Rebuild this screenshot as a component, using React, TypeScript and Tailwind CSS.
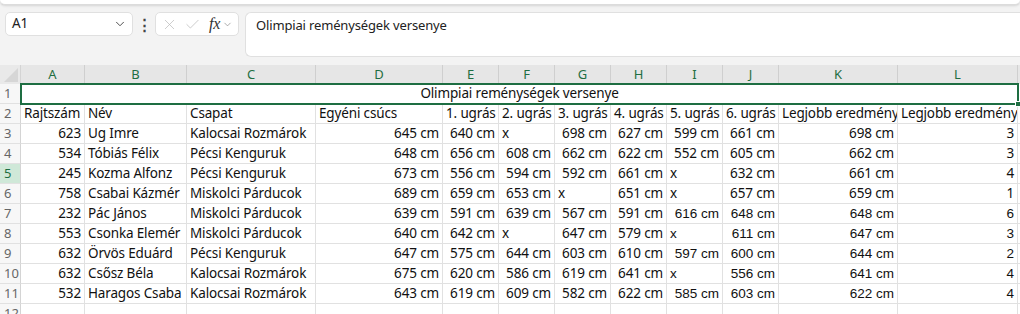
import { X, Check, ChevronDown } from "lucide-react"

const cols = ["A", "B", "C", "D", "E", "F", "G", "H", "I", "J", "K", "L"]

const header = ["Rajtszám", "Név", "Csapat", "Egyéni csúcs", "1. ugrás", "2. ugrás", "3. ugrás", "4. ugrás", "5. ugrás", "6. ugrás", "Legjobb eredmény", "Legjobb eredmény"]

const rows: (string | number)[][] = [
  [623, "Ug Imre", "Kalocsai Rozmárok", "645 cm", "640 cm", "x", "698 cm", "627 cm", "599 cm", "661 cm", "698 cm", 3],
  [534, "Tóbiás Félix", "Pécsi Kenguruk", "648 cm", "656 cm", "608 cm", "662 cm", "622 cm", "552 cm", "605 cm", "662 cm", 3],
  [245, "Kozma Alfonz", "Pécsi Kenguruk", "673 cm", "556 cm", "594 cm", "592 cm", "661 cm", "x", "632 cm", "661 cm", 4],
  [758, "Csabai Kázmér", "Miskolci Párducok", "689 cm", "659 cm", "653 cm", "x", "651 cm", "x", "657 cm", "659 cm", 1],
  [232, "Pác János", "Miskolci Párducok", "639 cm", "591 cm", "639 cm", "567 cm", "591 cm", "616 cm", "648 cm", "648 cm", 6],
  [553, "Csonka Elemér", "Miskolci Párducok", "640 cm", "642 cm", "x", "647 cm", "579 cm", "x", "611 cm", "647 cm", 3],
  [632, "Örvös Eduárd", "Pécsi Kenguruk", "647 cm", "575 cm", "644 cm", "603 cm", "610 cm", "597 cm", "600 cm", "644 cm", 2],
  [632, "Csősz Béla", "Kalocsai Rozmárok", "675 cm", "620 cm", "586 cm", "619 cm", "641 cm", "x", "556 cm", "641 cm", 4],
  [532, "Haragos Csaba", "Kalocsai Rozmárok", "643 cm", "619 cm", "609 cm", "582 cm", "622 cm", "585 cm", "603 cm", "622 cm", 4],
]

const grid = "grid grid-cols-[21px_64px_102px_129px_127px_56px_56px_56px_56px_56px_56px_119px_120px_10px]"

function RowHead({ n, active }: { n: number; active?: boolean }) {
  return (
    <div className={`h-[20px] flex items-center pl-[4px] text-[13px] tracking-normal border-r border-r-[#d4d4d4] border-b border-b-[#e1e1e1] ${active ? "bg-[#cfe8d8] text-[#1e6e42]" : "bg-[#f7f7f7] text-[#666]"}`}>
      {n}
    </div>
  )
}

function Cell({ v, col, arial }: { v: string | number; col: number; arial?: boolean }) {
  const right = col !== 1 && col !== 2 && v !== "x"
  return (
    <div className={`h-[20px] flex items-center px-[3px] whitespace-nowrap overflow-hidden border-r border-b border-[#e1e1e1] text-[#111] ${right ? "justify-end" : ""} ${arial ? "font-['Liberation_Sans'] text-[13.5px] tracking-normal" : ""}`}>
      {v}
    </div>
  )
}

export default function App() {
  return (
    <div className="w-[1020px] h-[314px] overflow-hidden bg-[#f3f3f3] font-['Noto_Sans',sans-serif] text-[13.5px] tracking-[-0.15px] leading-none">
      {/* ribbon bottom edge */}
      <div className="h-[5px] bg-white border-b border-[#dcdcdc] rounded-b-md shadow-sm" />

      {/* formula row */}
      <div className="flex items-start pt-[7px] pl-[5px] h-[60px]">
        <div className="w-[128px] h-[24px] bg-white border border-[#e0e0e0] rounded-[5px] flex items-center justify-between pl-[6px] pr-[5px] text-[13.5px] text-[#222]">
          <span>A1</span>
          <ChevronDown size={14} strokeWidth={1.6} className="text-[#444]" />
        </div>
        <div className="w-[22px] h-[24px] flex items-center justify-center text-[#444] text-[15px] font-bold">⋮</div>
        <div className="w-[84px] h-[24px] bg-white border border-[#e0e0e0] rounded-[5px] flex items-center pl-[5px] gap-[6px]">
          <X size={17} strokeWidth={1} className="text-[#b8b8b8]" />
          <Check size={17} strokeWidth={1} className="text-[#b8b8b8]" />
          <span className="font-['Liberation_Serif',serif] italic text-[16px] text-[#333] ml-[2px]">fx</span>
          <ChevronDown size={11} strokeWidth={1.5} className="text-[#888] -ml-[4px]" />
        </div>
        <div className="ml-[6px] flex-1 h-[45px] bg-white border border-[#e0e0e0] rounded-l-[6px] border-r-0 pl-[10px] pt-[6px] text-[13px] text-[#222]">
          Olimpiai reménységek versenye
        </div>
      </div>

      {/* sheet */}
      <div className="bg-white">
        {/* column headers */}
        <div className={`${grid} bg-[#f3f3f3]`}>
          <div className="h-[19px] bg-[#e9e9e9] border-r border-[#d4d4d4] relative overflow-hidden">
            <div className="absolute right-[2px] bottom-[2px] w-0 h-0 border-l-[14px] border-l-transparent border-b-[14px] border-b-[#d6d6d6]" />
          </div>
          {cols.map((c) => (
            <div key={c} className="h-[19px] bg-[#e6e6e6] border-r border-[#cfcfcf] flex items-center justify-center text-[13px] tracking-normal text-[#1e6e42]">
              {c}
            </div>
          ))}
          <div className="h-[19px] bg-[#e6e6e6]" />
        </div>

        {/* row 1: merged title */}
        <div className={grid}>
          <RowHead n={1} />
          <div className="col-span-12 h-[20px] relative flex items-center justify-center text-[#111]">
            <div className="absolute -top-[1px] -left-[1px] -right-[1px] -bottom-[1px] border-2 border-[#1e6e42]" />
            <div className="absolute -right-[3px] -bottom-[3px] w-[6px] h-[6px] bg-[#1e6e42] border border-white" />
            <span>Olimpiai reménységek versenye</span>
          </div>
          <div className="h-[20px] border-b border-[#e1e1e1]" />
        </div>

        {/* row 2: header */}
        <div className={grid}>
          <RowHead n={2} />
          {header.map((h, i) => (
            <Cell key={i} v={h} col={1} />
          ))}
          <div className="h-[20px] border-b border-[#e1e1e1]" />
        </div>

        {rows.map((r, ri) => (
          <div key={ri} className={grid}>
            <RowHead n={ri + 3} active={ri + 3 === 5} />
            {r.map((v, ci) => (
              <Cell key={ci} v={v} col={ci} arial={ri + 3 >= 7 && ci >= 8} />
            ))}
            <div className="h-[20px] border-b border-[#e1e1e1]" />
          </div>
        ))}

        <div className={grid}>
          <RowHead n={12} />
          {cols.map((c) => (
            <div key={c} className="h-[20px] border-r border-b border-[#e1e1e1]" />
          ))}
          <div className="h-[20px]" />
        </div>
      </div>
    </div>
  )
}
